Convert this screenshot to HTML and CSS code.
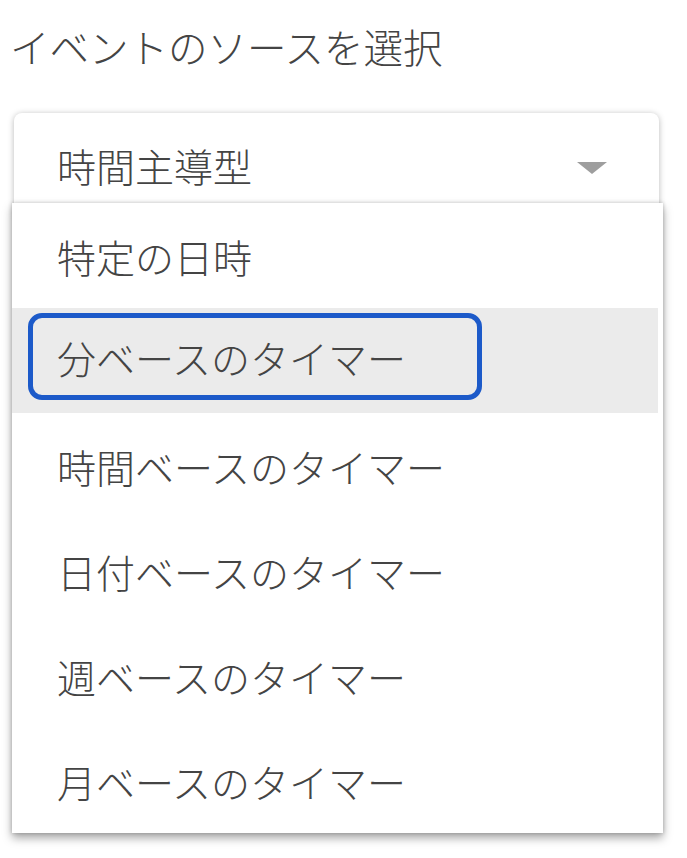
FILE: index.html
```html
<!DOCTYPE html>
<html lang="ja">
<head>
    <meta charset="UTF-8">
    <meta name="viewport" content="width=device-width, initial-scale=1.0">
    <title>イベントのソースを選択</title>
    <link rel="stylesheet" href="styles.css">
</head>
<body>
    <div class="page">
        <h1 class="title">イベントのソースを選択</h1>
        <div class="field">
            <div class="select">
                <span class="select-value">時間主導型</span>
                <span class="arrow"></span>
            </div>
            <ul class="menu">
                <li class="menu-item">特定の日時</li>
                <li class="menu-item active"><span class="focus">分ベースのタイマー</span></li>
                <li class="menu-item">時間ベースのタイマー</li>
                <li class="menu-item">日付ベースのタイマー</li>
                <li class="menu-item">週ベースのタイマー</li>
                <li class="menu-item">月ベースのタイマー</li>
            </ul>
        </div>
    </div>
</body>
</html>
```
FILE: styles.css
```css
html, body {
    min-height: 858px;
}
body {
    margin: 0;
    padding: 0;
    background-color: white;
    font-family: "Noto Sans CJK JP", "Noto Sans", sans-serif;
    color: #444;
}
.page {
    padding: 17px 0 25px 12px;
}
.title {
    margin: 0;
    font-size: 39.5px;
    font-weight: 300;
    line-height: 58px;
    margin-left: -2px;
    color: #444;
}
.field {
    margin-top: 38px;
    width: 651px;
}
.select {
    display: flex;
    align-items: center;
    justify-content: space-between;
    height: 104px;
    margin-left: 2px;
    width: 645px;
    padding: 0 52px 0 43px;
    box-sizing: border-box;
    background-color: white;
    border-radius: 8px;
    box-shadow: 0 1px 6px rgba(0, 0, 0, 0.28);
    font-size: 39px;
    font-weight: 300;
}
.arrow {
    width: 0;
    height: 0;
    border-left: 15px solid transparent;
    border-right: 15px solid transparent;
    border-top: 12px solid #9e9e9e;
    margin-top: 6px;
}
.menu {
    position: relative;
    margin: -14px 0 0 0;
    width: 651px;
    padding: 0;
    list-style: none;
    background-color: white;
    box-shadow: 0 5px 9px rgba(0, 0, 0, 0.35), 0 0 4px rgba(0, 0, 0, 0.2);
}
.menu-item {
    display: flex;
    align-items: center;
    height: 105px;
    padding-left: 45px;
    font-size: 39px;
    font-weight: 300;
    color: #444;
}
.menu-item.active {
    background-color: #ebebeb;
    padding-left: 16px;
    margin-right: 5px;
}
.focus {
    display: flex;
    align-items: center;
    width: 454px;
    height: 87px;
    padding-left: 24px;
    box-sizing: border-box;
    border: 5px solid #1c5ac9;
    border-radius: 14px;
    margin-top: -8px;
}
```
